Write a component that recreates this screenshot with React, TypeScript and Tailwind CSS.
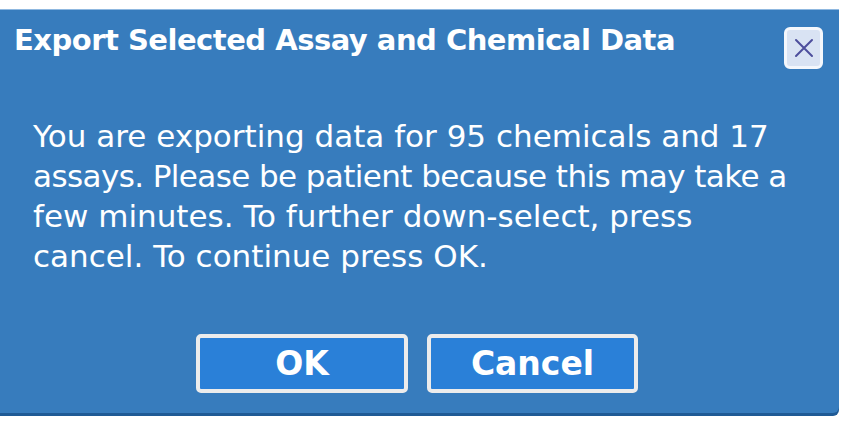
import React from 'react';

export default function App() {
  return (
    <div className="w-[846px] h-[425px] bg-white pt-[9px]" style={{ fontFamily: '"DejaVu Sans", Verdana, sans-serif' }}>
      <div className="w-[839px] h-[404px] bg-[#377cbd] rounded-br-[6px] border-t border-[#8fb8e0] shadow-[0_3px_0_#1f5a95] flex flex-col">
        {/* Title bar */}
        <div className="flex items-start justify-between pl-[14px] pr-[16px] pt-[10px]">
          <h1 className="text-white font-bold text-[29px] leading-[40px] tracking-[-0.5px]">
            Export Selected Assay and Chemical Data
          </h1>
          <button className="mt-[7px] w-[39px] h-[42px] rounded-[6px] bg-[#d9e3f3] border-[3px] border-[#f4f7fc] flex items-center justify-center">
            <svg width="22" height="22" viewBox="0 0 22 22">
              <path d="M3 3 L19 19 M19 3 L3 19" stroke="#4d4f9c" strokeWidth="2" strokeLinecap="round" />
            </svg>
          </button>
        </div>

        {/* Message */}
        <p className="pl-[33px] pr-[20px] mt-[47px] text-white text-[31px] leading-[40px] whitespace-nowrap">
          You are exporting data for 95 chemicals and 17
          <br />
          <span className="tracking-[-0.6px]">assays. Please be patient because this may take a</span>
          <br />
          few minutes. To further down-select, press
          <br />
          cancel. To continue press OK.
        </p>

        {/* Actions */}
        <div className="mt-auto mb-[20px] flex gap-[19px] pl-[196px]">
          <button className="w-[212px] h-[59px] rounded-[5px] bg-[#2a80d8] border-[4px] border-[#ececec] text-white font-bold text-[33px] leading-none">
            OK
          </button>
          <button className="w-[211px] h-[59px] rounded-[5px] bg-[#2a80d8] border-[4px] border-[#ececec] text-white font-bold text-[33px] leading-none">
            Cancel
          </button>
        </div>
      </div>
    </div>
  );
}
